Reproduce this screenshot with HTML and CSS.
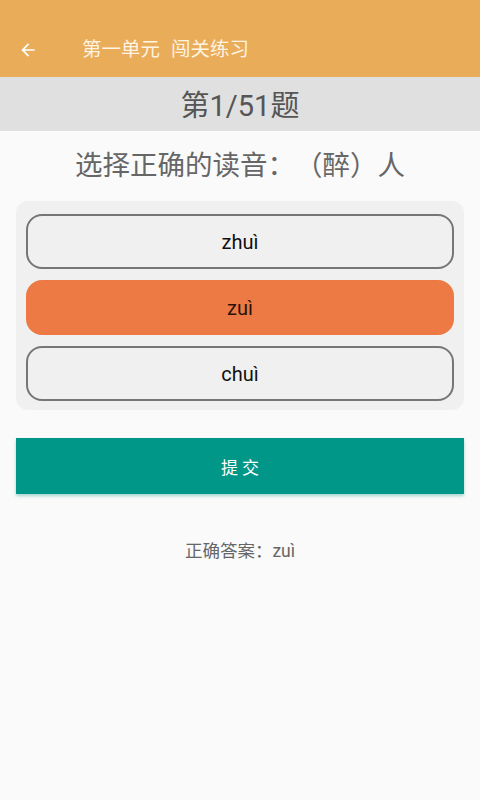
FILE: index.html
```html
<!DOCTYPE html>
<html lang="zh">
<head>
<meta charset="utf-8">
<link rel="stylesheet" href="styles.css">
</head>
<body>
<header class="appbar">
  <svg class="back" width="20" height="20" viewBox="0 0 24 24"><path d="M20 11H7.83l5.59-5.59L12 4l-8 8 8 8 1.41-1.41L7.83 13H20v-2z" fill="#fff"/></svg>
  <div class="title"><span>第一单元</span><span>闯关练习</span></div>
</header>
<div class="progress">第1/51题</div>
<main class="content">
  <div class="question">选择正确的读音：（醉）人</div>
  <div class="options">
    <div class="option">zhuì</div>
    <div class="option selected">zuì</div>
    <div class="option">chuì</div>
  </div>
  <div class="submit">提 交</div>
  <div class="answer">正确答案：zuì</div>
</main>
</body>
</html>
```
FILE: styles.css
```css
* { box-sizing: border-box; }
html, body { margin: 0; padding: 0; }
body {
  width: 480px;
  height: 800px;
  background: #fafafa;
  font-family: Roboto, "Noto Sans CJK SC", sans-serif;
  overflow: hidden;
  text-spacing-trim: space-all;
}
.appbar {
  height: 77px;
  background: #e9ac59;
  display: flex;
  align-items: center;
  padding: 22px 0 0 18px;
}
.back { display: block; }
.title {
  margin-left: 44px;
  color: #fff3e2;
  font-size: 19.5px;
  line-height: 24px;
  display: flex;
  gap: 11px;
}
.progress {
  height: 54px;
  background: #e0e0e0;
  color: #555;
  font-size: 29px;
  display: flex;
  align-items: center;
  justify-content: center;
  padding-bottom: 3px;
}
.content {
  padding: 0 16px;
  display: flex;
  flex-direction: column;
}
.question {
  text-align: center;
  color: #666;
  font-size: 27.5px;
  line-height: 34px;
  margin-top: 18px;
}
.options {
  margin-top: 18px;
  background: #f0f0f0;
  border-radius: 12px;
  padding: 13px 10px 9px;
  display: flex;
  flex-direction: column;
  gap: 11px;
}
.option {
  height: 55px;
  border: 2px solid #767676;
  border-radius: 16px;
  background: #f0f0f0;
  display: flex;
  align-items: center;
  justify-content: center;
  font-size: 20px;
  color: #111;
}
.option.selected {
  background: #ed7a45;
  border-color: #ed7a45;
  color: #2a1208;
}
.submit {
  margin-top: 28px;
  height: 56px;
  background: #009688;
  color: #fff;
  font-size: 17px;
  display: flex;
  align-items: center;
  justify-content: center;
  box-shadow: 0 2px 3px rgba(0, 150, 136, 0.35);
}
.answer {
  margin-top: 46px;
  text-align: center;
  color: #666;
  font-size: 17.5px;
  line-height: 22px;
}
```
